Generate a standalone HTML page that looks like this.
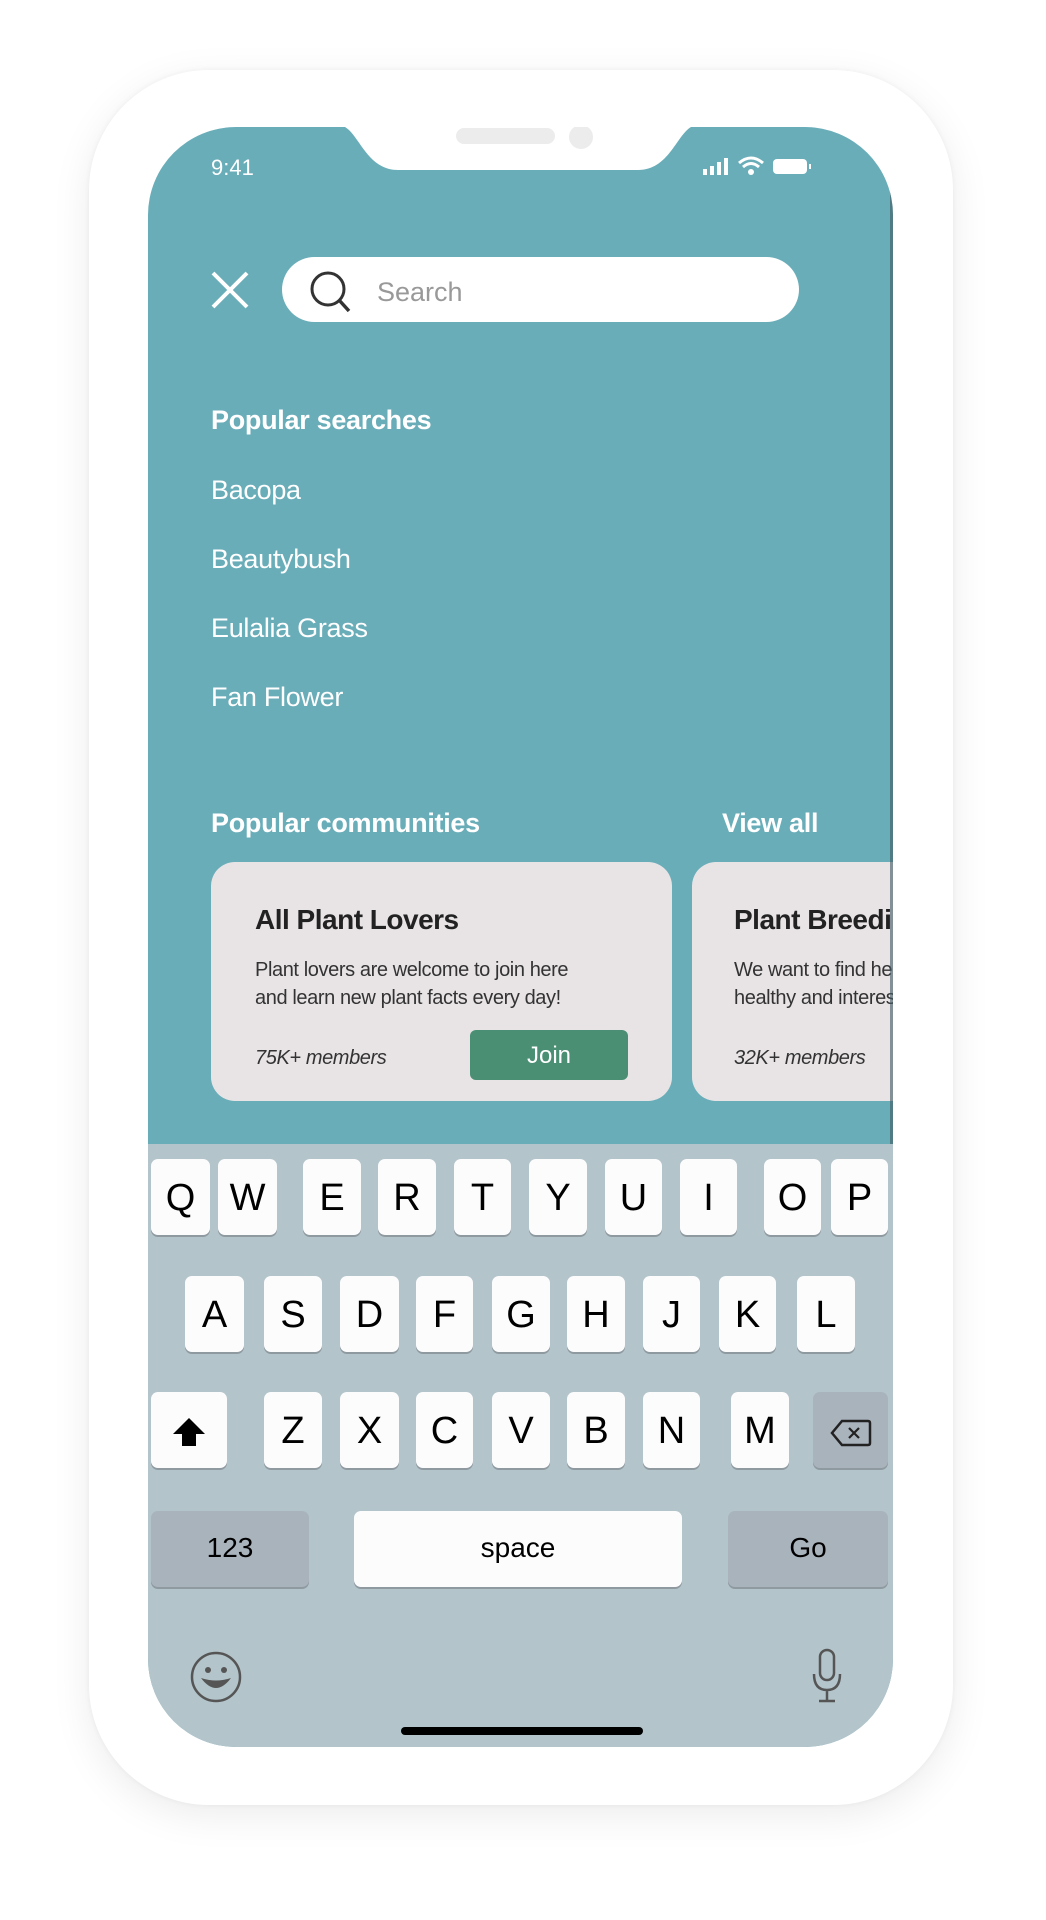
<!DOCTYPE html>
<html><head><meta charset="utf-8"><style>
*{margin:0;padding:0;box-sizing:border-box}
body{width:1046px;height:1920px;background:#fff;position:relative;overflow:hidden;font-family:"Liberation Sans",sans-serif}
.abs{position:absolute}
.phone{left:89px;top:70px;width:864px;height:1735px;border-radius:120px;background:#fff;box-shadow:0 10px 40px rgba(0,0,0,0.08),0 0 6px rgba(0,0,0,0.05)}
.screen{left:148px;top:127px;width:745px;height:1620px;border-radius:88px;background:#69adb9;overflow:hidden}
.kb{left:0;top:1017px;width:745px;height:610px;background:#b3c4ca}
.key{position:absolute;height:76px;background:#fcfcfd;border-radius:7px;box-shadow:0 2px 0 #8e9aa0;font-size:38px;color:#000;text-align:center;line-height:78px}
.gk{background:#a9b3bc}
.t{color:#fff;font-size:27px;letter-spacing:-0.3px}
.card{top:735px;height:239px;border-radius:24px;background:#e8e4e6}
</style></head><body>
<div class="abs phone"></div>
<div class="abs screen">
  <svg class="abs" style="left:190px;top:-2px" width="360" height="50" viewBox="0 0 360 50"><path d="M0 0 H360 C340 0 335 45 300 45 H60 C25 45 20 0 0 0 Z" fill="#fff"/></svg>
  <div class="abs" style="left:308px;top:1px;width:99px;height:16px;border-radius:8px;background:#ececec"></div>
  <div class="abs" style="left:421px;top:-2px;width:24px;height:24px;border-radius:50%;background:#ececec"></div>
  <div class="abs" style="left:63px;top:28px;color:#fff;font-size:22px">9:41</div>
  <svg class="abs" style="left:555px;top:28px" width="130" height="22" viewBox="0 0 130 22">
    <rect x="0" y="14" width="4" height="6" fill="#fff"/><rect x="7" y="11" width="4" height="9" fill="#fff"/><rect x="14" y="7" width="4" height="13" fill="#fff"/><rect x="21" y="3" width="4" height="17" fill="#fff"/>
    <path d="M36 8 Q48 -2 60 8" stroke="#fff" stroke-width="3" fill="none"/><path d="M40 12 Q48 5 56 12" stroke="#fff" stroke-width="3" fill="none"/><circle cx="48" cy="17" r="3" fill="#fff"/>
    <rect x="70" y="4" width="34" height="15" rx="4" fill="#fff"/><rect x="106" y="9" width="2" height="5" fill="#fff"/>
  </svg>
  <svg class="abs" style="left:63px;top:144px" width="38" height="38" viewBox="0 0 38 38"><path d="M2 2 L36 36 M36 2 L2 36" stroke="#fff" stroke-width="4"/></svg>
  <div class="abs" style="left:134px;top:130px;width:517px;height:65px;border-radius:33px;background:#fff"></div>
  <svg class="abs" style="left:160px;top:143px" width="46" height="46" viewBox="0 0 46 46"><circle cx="20" cy="19" r="16" stroke="#333" stroke-width="3" fill="none"/><path d="M31 30 L41 41" stroke="#333" stroke-width="3.5"/></svg>
  <div class="abs" style="left:229px;top:150px;font-size:27px;color:#999">Search</div>
  <div class="abs t" style="left:63px;top:278px;font-weight:bold">Popular searches</div>
  <div class="abs t" style="left:63px;top:348px">Bacopa</div>
  <div class="abs t" style="left:63px;top:417px">Beautybush</div>
  <div class="abs t" style="left:63px;top:486px">Eulalia Grass</div>
  <div class="abs t" style="left:63px;top:555px">Fan Flower</div>
  <div class="abs t" style="left:63px;top:681px;font-weight:bold">Popular communities</div>
  <div class="abs t" style="left:574px;top:681px;font-weight:bold">View all</div>
  <div class="abs card" style="left:63px;width:461px"></div>
  <div class="abs" style="left:107px;top:777px;font-size:28px;font-weight:bold;color:#222;letter-spacing:-0.5px">All Plant Lovers</div>
  <div class="abs" style="left:107px;top:829px;font-size:20px;color:#333;line-height:28px;letter-spacing:-0.4px">Plant lovers are welcome to join here<br>and learn new plant facts every day!</div>
  <div class="abs" style="left:107px;top:920px;font-size:20px;color:#333;font-style:italic;letter-spacing:-0.4px">75K+ members</div>
  <div class="abs" style="left:322px;top:903px;width:158px;height:50px;border-radius:6px;background:#4a8f74;color:#fff;font-size:24px;text-align:center;line-height:52px">Join</div>
  <div class="abs card" style="left:544px;width:300px"></div>
  <div class="abs" style="left:586px;top:777px;font-size:28px;font-weight:bold;color:#222;letter-spacing:-0.5px;white-space:nowrap">Plant Breeding</div>
  <div class="abs" style="left:586px;top:829px;font-size:20px;color:#333;line-height:28px;letter-spacing:-0.4px;white-space:nowrap">We want to find healthy<br>healthy and interesting</div>
  <div class="abs" style="left:586px;top:920px;font-size:20px;color:#333;font-style:italic;letter-spacing:-0.4px">32K+ members</div>
  <div class="abs" style="left:742px;top:0;width:3px;height:1017px;background:#3f5a60;opacity:.6"></div>
  <div class="abs kb">
    <div class="key" style="left:3px;top:15px;width:59px">Q</div>
    <div class="key" style="left:70px;top:15px;width:59px">W</div>
    <div class="key" style="left:155px;top:15px;width:58px">E</div>
    <div class="key" style="left:230px;top:15px;width:58px">R</div>
    <div class="key" style="left:306px;top:15px;width:57px">T</div>
    <div class="key" style="left:381px;top:15px;width:58px">Y</div>
    <div class="key" style="left:457px;top:15px;width:57px">U</div>
    <div class="key" style="left:532px;top:15px;width:57px">I</div>
    <div class="key" style="left:616px;top:15px;width:57px">O</div>
    <div class="key" style="left:683px;top:15px;width:57px">P</div>
    <div class="key" style="left:37px;top:132px;width:59px">A</div>
    <div class="key" style="left:116px;top:132px;width:58px">S</div>
    <div class="key" style="left:192px;top:132px;width:59px">D</div>
    <div class="key" style="left:268px;top:132px;width:57px">F</div>
    <div class="key" style="left:344px;top:132px;width:58px">G</div>
    <div class="key" style="left:419px;top:132px;width:58px">H</div>
    <div class="key" style="left:495px;top:132px;width:57px">J</div>
    <div class="key" style="left:571px;top:132px;width:57px">K</div>
    <div class="key" style="left:649px;top:132px;width:58px">L</div>
    <div class="key" style="left:3px;top:248px;width:76px"><svg width="36" height="34" viewBox="0 0 36 34" style="vertical-align:middle"><path d="M18 2 L34 18 H25 V30 H11 V18 H2 Z" fill="#000"/></svg></div>
    <div class="key" style="left:116px;top:248px;width:58px">Z</div>
    <div class="key" style="left:192px;top:248px;width:59px">X</div>
    <div class="key" style="left:268px;top:248px;width:57px">C</div>
    <div class="key" style="left:344px;top:248px;width:58px">V</div>
    <div class="key" style="left:419px;top:248px;width:58px">B</div>
    <div class="key" style="left:495px;top:248px;width:57px">N</div>
    <div class="key" style="left:583px;top:248px;width:58px">M</div>
    <div class="key gk" style="left:665px;top:248px;width:75px"><svg width="42" height="30" viewBox="0 0 42 30" style="vertical-align:middle"><path d="M12 3 H38 Q40 3 40 5 V25 Q40 27 38 27 H12 L2 15 Z" stroke="#222" stroke-width="2.5" fill="none"/><path d="M19 10 L29 20 M29 10 L19 20" stroke="#222" stroke-width="2.2"/></svg></div>
    <div class="key gk" style="left:3px;top:367px;width:158px;font-size:28px;line-height:74px">123</div>
    <div class="key" style="left:206px;top:367px;width:328px;font-size:28px;line-height:74px">space</div>
    <div class="key gk" style="left:580px;top:367px;width:160px;font-size:28px;line-height:74px">Go</div>
    <svg class="abs" style="left:41px;top:506px" width="54" height="54" viewBox="0 0 54 54"><circle cx="27" cy="27" r="24" stroke="#555" stroke-width="2.5" fill="none"/><circle cx="19" cy="20" r="3" fill="#555"/><circle cx="35" cy="20" r="3" fill="#555"/><path d="M12 28 Q27 48 42 28 Q27 33 12 28 Z" fill="#555"/></svg>
    <svg class="abs" style="left:662px;top:504px" width="34" height="56" viewBox="0 0 34 56"><rect x="10" y="2" width="14" height="30" rx="7" stroke="#555" stroke-width="2.5" fill="none"/><path d="M4 26 Q4 42 17 42 Q30 42 30 26 M17 42 V52 M9 53 H25" stroke="#555" stroke-width="2.5" fill="none"/></svg>
    <div class="abs" style="left:253px;top:583px;width:242px;height:8px;border-radius:4px;background:#000"></div>
  </div>
</div>
</body></html>
